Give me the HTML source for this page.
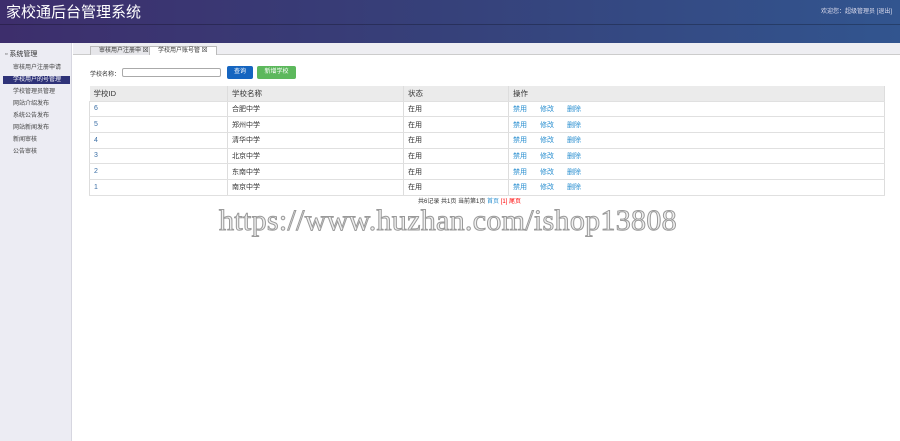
<!DOCTYPE html>
<html><head><meta charset="utf-8"><style>
*{margin:0;padding:0;box-sizing:border-box}
body{width:900px;height:441px;overflow:hidden;background:#fff;font-family:"Liberation Sans","Noto Sans CJK SC",sans-serif;position:relative;font-size:8px;color:#333}
.hd{position:absolute;left:0;top:0;width:900px;height:43px;background:linear-gradient(90deg,#3d2e6c,#36417a 50%,#32558f);}
.hd .band{position:absolute;left:0;top:24px;width:900px;height:1px;background:rgba(0,0,0,.25)}
.hd h1{position:absolute;left:6px;top:1px;font-size:15px;font-weight:normal;color:#fff;font-family:"Liberation Sans","Noto Sans CJK SC",sans-serif}
.hd .r{position:absolute;right:8px;top:6px;color:#dde;font-size:6px}
.sb{position:absolute;left:0;top:43px;width:72px;height:398px;background:#ececf3;border-right:1px solid #d6d6e0}
.sb .t{position:absolute;left:5px;top:6px;font-size:7px;color:#333}
.sb .i{position:absolute;left:13px;font-size:6px;color:#444;height:8px;line-height:8px}
.sb .a{left:3px;width:67px;background:#2e3278;color:#fff;padding-left:10px}
.tb{position:absolute;left:73px;top:43px;width:827px;height:12px;background:#eeeef2;border-bottom:1px solid #ccc}
.tab{position:absolute;top:3px;height:9px;font-size:6px;line-height:9px;padding:0 8px;border:1px solid #bbb;border-bottom:none;background:#e6e6ea;color:#333}
.in{position:absolute;left:122px;top:68px;width:99px;height:9px;border:1px solid #aaa;border-radius:2px}
.btn{position:absolute;top:66px;height:13px;color:#fff;font-size:6px;line-height:13px;text-align:center;border-radius:2px}
table{position:absolute;left:89px;top:86px;width:796px;border-collapse:collapse;font-size:7px}
td,th{height:15.7px;padding-left:4px;text-align:left;border-bottom:1px solid #e0e0e0;border-right:1px solid #ddd;font-weight:normal;vertical-align:middle}
th{background:#ebebeb;color:#333;font-size:7.5px;height:15px}
tr td:first-child{color:#3a6ea5;border-left:1px solid #ddd}
.l{color:#2a8fd0;margin-right:13px}
.wm{position:absolute;left:219px;top:204px;font-family:"Liberation Serif",serif;font-size:30px;color:#f0f0f0;-webkit-text-stroke:1px #9a9a9a;letter-spacing:0.3px}
</style></head><body>
<div class="hd"><div class="band"></div><h1>家校通后台管理系统</h1><div class="r">欢迎您：超级管理员 [退出]</div></div>
<div class="sb"><div class="t">▫ 系统管理</div>
<div class="i" style="top:21px">审核用户注册申请</div>
<div class="i a" style="top:33px">学校用户的号管理</div>
<div class="i" style="top:45px">学校管理员管理</div>
<div class="i" style="top:57px">网站介绍发布</div>
<div class="i" style="top:69px">系统公告发布</div>
<div class="i" style="top:81px">网站新闻发布</div>
<div class="i" style="top:93px">新闻审核</div>
<div class="i" style="top:105px">公告审核</div></div>
<div class="tb"><div class="tab" style="left:17px">审核用户注册申 ⊠</div><div class="tab" style="left:76px;background:#fff">学校用户账号管 ⊠</div></div>
<div style="position:absolute;left:90px;top:69px;font-size:6px">学校名称：</div>
<div class="in"></div>
<div class="btn" style="left:227px;width:26px;background:#1565c0">查询</div>
<div class="btn" style="left:257px;width:39px;background:#5cb85c">新增学校</div>
<table>
<tr><th style="width:138px">学校ID</th><th style="width:176px">学校名称</th><th style="width:105px">状态</th><th>操作</th></tr>
<tr><td>6</td><td>合肥中学</td><td>在用</td><td><span class="l">禁用</span><span class="l">修改</span><span class="l">删除</span></td></tr>
<tr><td>5</td><td>郑州中学</td><td>在用</td><td><span class="l">禁用</span><span class="l">修改</span><span class="l">删除</span></td></tr>
<tr><td>4</td><td>清华中学</td><td>在用</td><td><span class="l">禁用</span><span class="l">修改</span><span class="l">删除</span></td></tr>
<tr><td>3</td><td>北京中学</td><td>在用</td><td><span class="l">禁用</span><span class="l">修改</span><span class="l">删除</span></td></tr>
<tr><td>2</td><td>东南中学</td><td>在用</td><td><span class="l">禁用</span><span class="l">修改</span><span class="l">删除</span></td></tr>
<tr><td>1</td><td>南京中学</td><td>在用</td><td><span class="l">禁用</span><span class="l">修改</span><span class="l">删除</span></td></tr>
</table>
<div style="position:absolute;left:418px;top:196px;font-size:6px">共6记录 共1页 当前第1页 <span style="color:#2a8fd0">首页</span> <span style="color:red">[1] 尾页</span></div>
<div class="wm">https://www.huzhan.com/ishop13808</div>
</body></html>
